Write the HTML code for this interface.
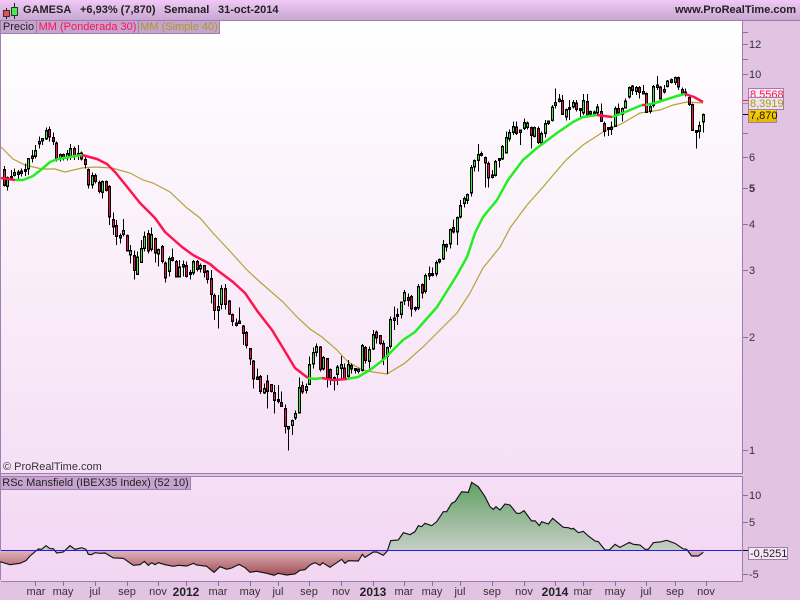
<!DOCTYPE html>
<html><head><meta charset="utf-8"><style>
html,body{margin:0;padding:0}
body{width:800px;height:600px;position:relative;overflow:hidden;background:#e2c3e2;font-family:"Liberation Sans",sans-serif;font-size:11px;color:#222}
.a{position:absolute;white-space:nowrap}
#hd{left:0;top:0;width:800px;height:20px;background:linear-gradient(#f0c8f6,#c8a8d2);border-bottom:1px solid #9a7fb0}
#ch{left:1px;top:21px;width:741px;height:452px;background:linear-gradient(#fff,#f5e0f5);border-right:1px solid #9a7fb0;border-bottom:1px solid #9a7fb0}
#lb{left:0;top:21px;width:1px;height:559px;background:#a080b0}
#p2{left:1px;top:476px;width:741px;height:104px;background:linear-gradient(#f6def6,#f2d6f2);border:solid #9a7fb0;border-width:1px 1px 1px 0}
.t{font-weight:bold;top:4px;font-size:11px;line-height:13px;color:#222}
.l{top:21px;height:12px;line-height:12px;background:#c6a4ce;border:solid #9a7fb0;border-width:0 1px 1px 0;text-align:center;font-size:11px}
.y{left:749px;font-size:11px;line-height:14px;color:#333}
.x{top:585px;font-size:11px;line-height:14px;transform:translateX(-50%);color:#333}
.b{font-weight:bold;font-size:12px;color:#222}
.tag{border:1px solid #9a7fb0;font-size:11px;line-height:12px;padding:0 1px;height:11px}
svg{position:absolute;left:0;top:0}
</style></head><body>
<div class="a" id="hd"></div>
<div class="a" id="ch"></div>
<div class="a" id="lb"></div>
<div class="a" id="p2"></div>
<div class="a t" style="left:23px">GAMESA</div>
<div class="a t" style="left:80px">+6,93% (7,870)</div>
<div class="a t" style="left:164px">Semanal</div>
<div class="a t" style="left:218px">31-oct-2014</div>
<div class="a t" style="right:4px">www.ProRealTime.com</div>
<div class="a l" style="left:1px;width:35px">Precio</div>
<div class="a l" style="left:37px;width:101px;color:#ff1155">MM (Ponderada 30)</div>
<div class="a l" style="left:139px;width:80px;color:#a89a20">MM (Simple 40)</div>
<div class="a" style="left:3px;top:461px;font-size:11px;line-height:13px;color:#333">© ProRealTime.com</div>
<div class="a l" style="left:1px;top:477px;width:189px;color:#222">RSc Mansfield (IBEX35 Index) (52 10)</div>

<svg width="800" height="600" viewBox="0 0 800 600">
<defs>
<linearGradient id="gg" gradientUnits="userSpaceOnUse" x1="0" y1="60" x2="0" y2="271"><stop offset="0" stop-color="#5d9f5f"/><stop offset="1" stop-color="#c6cec6"/></linearGradient>
<linearGradient id="rg" gradientUnits="userSpaceOnUse" x1="0" y1="271" x2="0" y2="350"><stop offset="0" stop-color="#e0b4bc"/><stop offset="1" stop-color="#a04850"/></linearGradient>
<clipPath id="cu"><rect x="0" y="0" width="2230" height="271"/></clipPath>
<clipPath id="cd"><rect x="0" y="271" width="2230" height="100"/></clipPath>
<path id="rs" d="M0 305L30 314 60 310 78 302 90 288 115 267 125 268 138 257 150 266 160 266 170 279 190 276 210 257 225 268 245 263 258 268 265 283 275 284 285 278 300 280 315 279 340 294 370 295 400 316 420 314 433 304 445 316 455 308 465 314 475 308 495 314 520 319 535 316 560 318 580 310 590 315 620 319 642 337 660 320 680 328 695 324 717 313 735 323 750 337 770 334 800 340 822 346 835 340 860 345 885 342 900 331 915 329 930 315 945 308 960 316 968 308 990 322 1025 298 1035 310 1045 302 1075 303 1087 283 1095 292 1120 276 1130 276 1150 286 1162 273 1172 242 1195 240 1210 218 1230 224 1245 215 1255 197 1265 200 1275 190 1295 197 1310 185 1330 155 1340 155 1355 130 1365 125 1385 95 1405 97 1415 67 1435 80 1455 110 1470 140 1480 148 1488 140 1500 150 1515 132 1530 135 1550 160 1560 160 1572 152 1595 183 1605 182 1618 197 1625 185 1645 192 1658 175 1690 202 1705 203 1715 207 1720 205 1735 218 1750 214 1765 228 1785 243 1795 245 1815 270 1828 270 1845 253 1860 262 1888 247 1900 253 1920 255 1935 268 1945 268 1960 248 1980 246 2000 241 2025 250 2050 267 2060 268 2075 288 2095 288 2110 277"/>
<path id="rf" d="M0 271L0 305 30 314 60 310 78 302 90 288 115 267 125 268 138 257 150 266 160 266 170 279 190 276 210 257 225 268 245 263 258 268 265 283 275 284 285 278 300 280 315 279 340 294 370 295 400 316 420 314 433 304 445 316 455 308 465 314 475 308 495 314 520 319 535 316 560 318 580 310 590 315 620 319 642 337 660 320 680 328 695 324 717 313 735 323 750 337 770 334 800 340 822 346 835 340 860 345 885 342 900 331 915 329 930 315 945 308 960 316 968 308 990 322 1025 298 1035 310 1045 302 1075 303 1087 283 1095 292 1120 276 1130 276 1150 286 1162 273 1172 242 1195 240 1210 218 1230 224 1245 215 1255 197 1265 200 1275 190 1295 197 1310 185 1330 155 1340 155 1355 130 1365 125 1385 95 1405 97 1415 67 1435 80 1455 110 1470 140 1480 148 1488 140 1500 150 1515 132 1530 135 1550 160 1560 160 1572 152 1595 183 1605 182 1618 197 1625 185 1645 192 1658 175 1690 202 1705 203 1715 207 1720 205 1735 218 1750 214 1765 228 1785 243 1795 245 1815 270 1828 270 1845 253 1860 262 1888 247 1900 253 1920 255 1935 268 1945 268 1960 248 1980 246 2000 241 2025 250 2050 267 2060 268 2075 288 2095 288 2110 277 2110 271Z"/>
</defs>

<!-- logo -->
<g shape-rendering="crispEdges">
<path d="M6.5 8V19M14.5 3V19" stroke="#222" stroke-width="1"/>
<rect x="3.5" y="10.5" width="6" height="6" fill="#e85050" stroke="#333"/>
<rect x="11.5" y="7.5" width="6" height="8" fill="#44ee44" stroke="#333"/>
</g>

<!-- olive SMA -->
<polyline fill="none" stroke="#b5a236" stroke-width="1.2" points="1,147 13,159 25,165 42,169 55,169 65,172 82,168 95,167 112,168 130,173 143,180 153,183 170,192 187,208 200,218 213,233 227,248 247,270 260,282 283,302 297,317 310,329 322,337 337,350 348,362 363,370 373,372 387,374 405,363 423,347 443,327 457,313 470,293 483,268 500,247 510,228 527,205 543,187 560,167 567,159 583,145 603,132 623,123 640,113 660,110 673,105 687,102 703,103"/>

<!-- candles -->
<g shape-rendering="crispEdges" fill="none">
<g transform="translate(.1667,120) scale(.33333)">
<path stroke="#000" stroke-width="3" d="M13 138V200M22 170V212M34 150V178M43 145V170M55 150V178M64 145V170M76 130V168M85 115V165M97 90V128M106 75V115M118 50V85M127 55V75M139 22V60M148 20V65M160 38V75M169 65V125M181 100V125M190 100V122M202 90V122M211 72V120M223 80V120M235 75V120M244 95V122M256 108V145M265 145V205M277 158V205M286 160V190M298 182V220M307 182V235M319 182V215M328 195V315M340 278V345M349 300V375M361 340V370M370 297V350M382 343V395M391 375V430M403 392V478M412 395V465M424 360V428M433 335V395M445 330V400M454 322V395M466 353V428M475 385V440M487 375V430M496 425V488M508 410V470M517 385V425M529 420V472M538 420V472M550 422V470M559 425V472M571 450V478M580 420V465M592 420V455M601 430V458M613 435V472M622 450V490"/>
<g stroke-width="9" stroke-linecap="square" stroke="#000"><path d="M13 152V194M148 32V48M160 56V62M169 72V114M190 107V112M223 89V106M235 103V105M244 102V114M256 122V130M265 152V192M286 169V181M298 190V212M319 187V208M328 202V288M340 301V318M349 319V346M382 349V390M403 409V448M445 344V390M466 359V396M487 382V421M496 432V471M517 416V418M529 427V468M559 439V466M592 427V446M613 440V454M622 456V476M22 176V196M34 172V173M43 161V163M55 159V161M64 156V157M76 151V152M85 119V144M97 111V112M106 94V106M118 68V69M127 59V60M139 34V54M181 107V114M202 104V111M211 89V106M277 169V192M307 187V214M361 350V351M370 335V340M391 394V402M412 414V461M424 388V424M433 352V382M454 346V386M475 391V399M508 419V452M538 444V468M550 437V438M571 460V461M580 427V456M601 439V444"/></g>
<path stroke="#f0124f" stroke-width="3" d="M13 152V194M148 32V48M160 56V62M169 72V114M190 107V112M223 89V106M235 103V105M244 102V114M256 122V130M265 152V192M286 169V181M298 190V212M319 187V208M328 202V288M340 301V318M349 319V346M382 349V390M403 409V448M445 344V390M466 359V396M487 382V421M496 432V471M517 416V418M529 427V468M559 439V466M592 427V446M613 440V454M622 456V476"/>
<path stroke="#3fe83f" stroke-width="3" d="M22 176V196M34 172V173M43 161V163M55 159V161M64 156V157M76 151V152M85 119V144M97 111V112M106 94V106M118 68V69M127 59V60M139 34V54M181 107V114M202 104V111M211 89V106M277 169V192M307 187V214M361 350V351M370 335V340M391 394V402M412 414V461M424 388V424M433 352V382M454 346V386M475 391V399M508 419V452M538 444V468M550 437V438M571 460V461M580 427V456M601 439V444"/>
</g>
<g transform="translate(200.1667,270) scale(.33333)">
<path stroke="#000" stroke-width="3" d="M34 0V100M43 70V150M55 75V175M64 45V118M76 42V118M88 90V135M97 130V168M109 145V170M118 112V162M130 165V225M139 183V235M151 235V285M160 270V355M172 295V330M181 315V372M193 340V372M202 315V415M214 342V368M223 345V430M235 345V400M244 365V410M256 403V490M265 468V542M277 448V495M286 422V450M298 322V430M307 335V372M319 340V370M328 260V345M340 232V295M349 220V260M361 228V305M370 258V302M382 265V352M391 295V345M403 320V362M412 285V345M424 258V330M433 280V330M445 270V322M454 280V310M466 295V310M475 295V310M487 222V305M496 228V280M508 230V295M520 180V240M529 182V220M541 195V225M550 212V285M562 230V312M571 140V235M583 110V180M592 115V165"/>
<g stroke-width="9" stroke-linecap="square" stroke="#000"><path d="M34 29V70M43 79V118M76 59V101M88 96V129M97 137V151M109 162V163M118 156V157M130 171V188M139 190V224M151 239V264M160 276V324M181 322V361M202 336V361M214 347V361M223 371V388M235 391V392M244 400V406M256 419V466M307 349V363M361 234V296M382 269V321M391 302V321M433 297V324M454 290V294M496 236V268M529 189V201M541 200V218M550 224V264M55 112V118M64 59V101M172 324V325M193 359V366M265 473V474M277 454V464M286 434V441M298 356V426M319 352V358M328 287V341M340 251V279M349 232V244M370 266V294M403 325V326M412 294V310M424 287V292M445 287V316M466 298V299M475 300V301M487 230V298M508 242V271M520 197V234M562 236V256M571 152V226M583 147V148M592 136V137"/></g>
<path stroke="#f0124f" stroke-width="3" d="M34 29V70M43 79V118M76 59V101M88 96V129M97 137V151M109 162V163M118 156V157M130 171V188M139 190V224M151 239V264M160 276V324M181 322V361M202 336V361M214 347V361M223 371V388M235 391V392M244 400V406M256 419V466M307 349V363M361 234V296M382 269V321M391 302V321M433 297V324M454 290V294M496 236V268M529 189V201M541 200V218M550 224V264"/>
<path stroke="#3fe83f" stroke-width="3" d="M55 112V118M64 59V101M172 324V325M193 359V366M265 473V474M277 454V464M286 434V441M298 356V426M319 352V358M328 287V341M340 251V279M349 232V244M370 266V294M403 325V326M412 294V310M424 287V292M445 287V316M466 298V299M475 300V301M487 230V298M508 242V271M520 197V234M562 236V256M571 152V226M583 147V148M592 136V137"/>
</g>
<g transform="translate(360.1667,130) scale(.33333)">
<path stroke="#000" stroke-width="3" d="M124 515V565M133 480V525M145 490V530M154 495V560M166 530V545M175 462V540M187 460V505M196 430V490M208 410V450M217 412V440M229 392V440M238 385V400M250 330V390M259 340V365M271 295V355M280 268V310M292 260V345M301 210V265M313 200V232M322 190V222M334 105V200M343 88V125M355 42V125M364 65V80M376 80V172M385 95V172M397 120V145M406 90V140M418 85V113"/>
<g stroke-width="9" stroke-linecap="square" stroke="#000"><path d="M124 519V551M133 491V510M166 535V536M175 472V531M196 439V481M208 434V435M217 433V434M229 400V429M238 392V393M250 347V384M259 346V348M271 302V339M292 266V303M301 230V258M313 209V218M322 197V208M334 115V186M343 95V108M355 77V88M364 73V74M397 138V139M406 97V134M418 88V89M145 506V508M154 503V534M187 466V486M280 296V303M376 86V96M385 104V141"/></g>
<path stroke="#3fe83f" stroke-width="3" d="M124 519V551M133 491V510M166 535V536M175 472V531M196 439V481M208 434V435M217 433V434M229 400V429M238 392V393M250 347V384M259 346V348M271 302V339M292 266V303M301 230V258M313 209V218M322 197V208M334 115V186M343 95V108M355 77V88M364 73V74M397 138V139M406 97V134M418 88V89"/>
<path stroke="#f0124f" stroke-width="3" d="M145 506V508M154 503V534M187 466V486M280 296V303M376 86V96M385 104V141"/>
</g>
<g transform="translate(500.1667,80) scale(.33333)">
<path stroke="#000" stroke-width="3" d="M7 195V240M19 155V220M28 148V185M40 125V165M49 125V165M61 148V195M73 115V150M82 125V148M94 140V205M103 140V172M115 140V192M124 155V190M136 120V172M145 122V135M157 75V125M166 25V85M178 42V68M187 45V105M199 85V122M208 60V120M220 60V85M229 60V95M241 85V112M250 42V105M262 42V110M271 92V105M283 92V105M292 72V108M304 70V125M313 125V170M325 142V168M334 125V165M346 80V140M355 70V105"/>
<g stroke-width="9" stroke-linecap="square" stroke="#000"><path d="M7 202V234M19 176V216M28 161V174M40 143V154M61 153V154M73 131V142M82 132V139M103 145V166M124 164V186M136 134V158M145 126V128M157 84V118M166 71V74M178 60V61M199 91V108M220 71V78M241 88V89M250 64V96M271 98V99M292 84V96M334 144V146M346 89V136M49 144V158M94 146V164M115 149V184M187 64V101M208 85V86M229 72V86M262 67V103M283 99V100M304 97V121M313 134V151M325 145V146M355 89V96"/></g>
<path stroke="#3fe83f" stroke-width="3" d="M7 202V234M19 176V216M28 161V174M40 143V154M61 153V154M73 131V142M82 132V139M103 145V166M124 164V186M136 134V158M145 126V128M157 84V118M166 71V74M178 60V61M199 91V108M220 71V78M241 88V89M250 64V96M271 98V99M292 84V96M334 144V146M346 89V136"/>
<path stroke="#f0124f" stroke-width="3" d="M49 144V158M94 146V164M115 149V184M187 64V101M208 85V86M229 72V86M262 67V103M283 99V100M304 97V121M313 134V151M325 145V146M355 89V96"/>
</g>
<g transform="translate(620.1667,70) scale(.33333)">
<path stroke="#000" stroke-width="3" d="M7 112V155M16 85V115M28 50V85M37 45V75M49 48V75M58 48V85M70 45V70M79 68V128M91 100V130M100 45V112M112 18V60M121 48V88M133 45V70M142 30V52M154 25V40M166 20V45M175 20V60M187 52V75M196 55V80M208 80V108M217 100V183M229 180V235M238 155V205M250 130V188"/>
<g stroke-width="9" stroke-linecap="square" stroke="#000"><path d="M7 119V131M16 96V111M28 56V78M49 56V61M70 68V69M91 112V121M100 52V104M112 48V49M133 62V63M142 36V46M166 26V34M196 69V71M229 184V185M238 169V181M250 136V153M37 51V58M58 56V64M79 74V124M121 54V84M154 32V34M175 26V48M187 61V68M208 86V101M217 106V178"/></g>
<path stroke="#3fe83f" stroke-width="3" d="M7 119V131M16 96V111M28 56V78M49 56V61M70 68V69M91 112V121M100 52V104M112 48V49M133 62V63M142 36V46M166 26V34M196 69V71M229 184V185M238 169V181M250 136V153"/>
<path stroke="#f0124f" stroke-width="3" d="M37 51V58M58 56V64M79 74V124M121 54V84M154 32V34M175 26V48M187 61V68M208 86V101M217 106V178"/>
</g>
</g>

<!-- WMA -->
<g fill="none" stroke-width="2.5" stroke-linejoin="round">
<polyline stroke="#ff1450" points="1,178 15,180"/>
<polyline stroke="#22ee22" points="15,180 23,180 33,176 42,169 50,162 58,159 70,157 82,155"/>
<polyline stroke="#ff1450" points="82,155 97,159 107,164 115,172 128,188 140,203 155,218 165,232 182,247 193,255 210,264 217,270 233,282 245,293 258,312 272,330 283,348 295,368 308,378"/>
<polyline stroke="#22ee22" points="308,378 315,379 322,378"/>
<polyline stroke="#ff1450" points="322,378 333,380 347,379"/>
<polyline stroke="#22ee22" points="347,379 358,377 370,370 383,360 403,340 415,332 437,307 457,275 467,257 475,233 483,217 497,200 508,180 523,160 537,148 557,133 573,122 583,117 597,115"/>
<polyline stroke="#ff1450" points="597,115 612,117"/>
<polyline stroke="#22ee22" points="612,117 623,113 642,105"/>
<polyline stroke="#ff1450" points="642,105 646,105"/>
<polyline stroke="#22ee22" points="646,105 655,103 677,96 685,94"/>
<polyline stroke="#ff1450" points="685,94 694,97 703,102"/>
</g>

<!-- ticks -->
<path shape-rendering="crispEdges" stroke="#8a7090" stroke-width="1" d="M743 32.5h5M743 44.5h5M743 59.5h5M743 74.5h5M743 133.5h5M743 157.5h5M743 188.5h5M743 224.5h5M743 270.5h5M743 337.5h5M743 450.5h5M743 495.5h5M743 522.5h5M743 574.5h5M35.5 581v5M63.5 581v5M95.5 581v5M127.5 581v5M158.5 581v5M186.5 581v5M218.5 581v5M250.5 581v5M278.5 581v5M309.5 581v5M341.5 581v5M373.5 581v5M404.5 581v5M432.5 581v5M460.5 581v5M492.5 581v5M524.5 581v5M555.5 581v5M583.5 581v5M615.5 581v5M646.5 581v5M675.5 581v5M706.5 581v5"/>
<path shape-rendering="crispEdges" d="M743 100.5h5" stroke="#ff1450"/>
<path shape-rendering="crispEdges" d="M743 103.5h5" stroke="#b5a236"/>
<path shape-rendering="crispEdges" d="M743 114.5h5M743 550.5h5" stroke="#000"/>

<!-- RSC -->
<g transform="translate(0,460) scale(.33333)">
<use href="#rf" fill="url(#gg)" clip-path="url(#cu)"/>
<use href="#rf" fill="url(#rg)" clip-path="url(#cd)"/>
<use href="#rs" fill="none" stroke="#111" stroke-width="3.4"/>
</g>
<path shape-rendering="crispEdges" d="M1 550.5H742" stroke="#2020e0" stroke-width="1"/>
</svg>

<div class="a y" style="top:38px">12</div>
<div class="a y" style="top:68px">10</div>
<div class="a y" style="top:151px">6</div>
<div class="a y" style="top:182px;font-weight:bold">5</div>
<div class="a y" style="top:218px">4</div>
<div class="a y" style="top:264px">3</div>
<div class="a y" style="top:331px">2</div>
<div class="a y" style="top:444px">1</div>
<div class="a y" style="top:489px">10</div>
<div class="a y" style="top:516px">5</div>
<div class="a y" style="top:568px">-5</div>

<div class="a tag" style="left:748px;top:88px;width:32px;background:#fbeaf4;color:#ff1450">8,5568</div>
<div class="a tag" style="left:748px;top:97px;width:32px;background:#f0e2ea;color:#a89a20">8,3919</div>
<div class="a tag" style="left:748px;top:109px;width:25px;height:12px;background:linear-gradient(#ffd000,#e8b800);color:#111">7,870</div>
<div class="a tag" style="left:748px;top:547px;width:36px;background:#f6e6f4;color:#222">-0,5251</div>

<div class="a x" style="left:36px">mar</div>
<div class="a x" style="left:63px">may</div>
<div class="a x" style="left:95px">jul</div>
<div class="a x" style="left:127px">sep</div>
<div class="a x" style="left:158px">nov</div>
<div class="a x b" style="left:186px">2012</div>
<div class="a x" style="left:218px">mar</div>
<div class="a x" style="left:250px">may</div>
<div class="a x" style="left:278px">jul</div>
<div class="a x" style="left:309px">sep</div>
<div class="a x" style="left:341px">nov</div>
<div class="a x b" style="left:373px">2013</div>
<div class="a x" style="left:404px">mar</div>
<div class="a x" style="left:432px">may</div>
<div class="a x" style="left:460px">jul</div>
<div class="a x" style="left:492px">sep</div>
<div class="a x" style="left:524px">nov</div>
<div class="a x b" style="left:555px">2014</div>
<div class="a x" style="left:583px">mar</div>
<div class="a x" style="left:615px">may</div>
<div class="a x" style="left:646px">jul</div>
<div class="a x" style="left:675px">sep</div>
<div class="a x" style="left:706px">nov</div>
</body></html>
